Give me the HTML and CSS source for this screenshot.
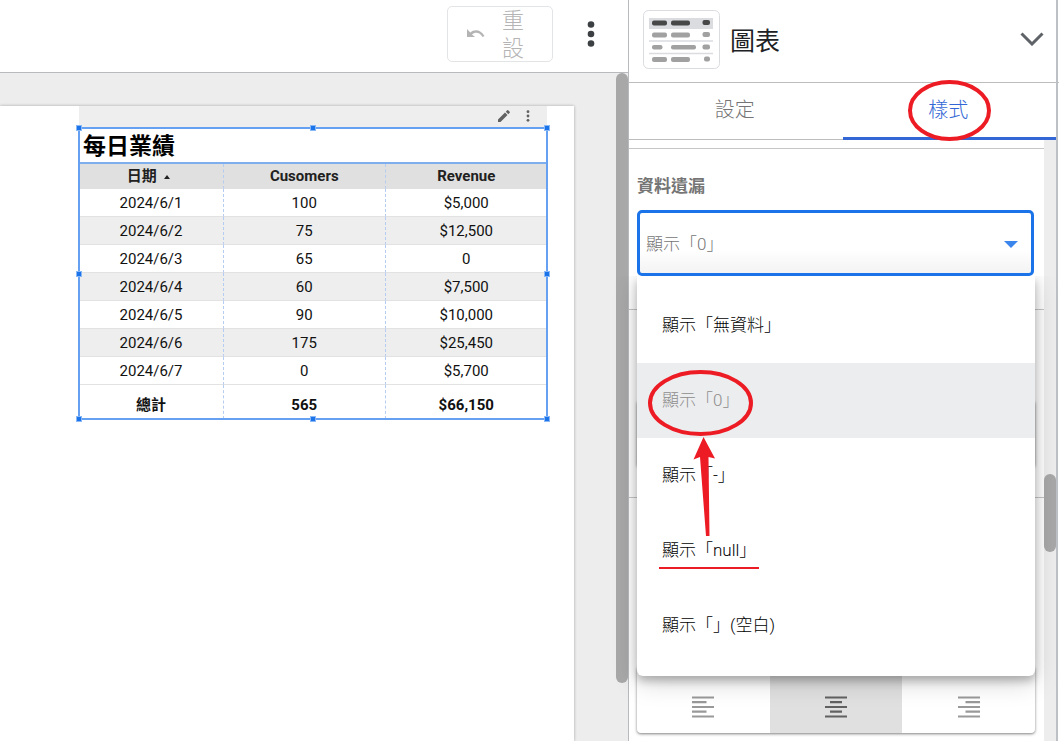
FILE: index.html
```html
<!DOCTYPE html>
<html lang="zh-Hant">
<head>
<meta charset="utf-8">
<title>每日業績</title>
<meta name="viewport" content="width=device-width, initial-scale=1">
<link rel="stylesheet" href="styles.css">
</head>
<body>
<div class="app">
  <main class="editor">
    <header class="toolbar">
      <button class="reset" type="button">
        <svg class="reset-icon" width="18" height="10" viewBox="0 0 18 10" aria-hidden="true"><path d="M0 0v8h8L5 5.400C8 2.600 13 3 15.500 8l2-1C14 .600 7.500-.200 3.300 3.500Z" fill="currentColor"/></svg>
        <span class="reset-label">重設</span>
      </button>
      <button class="icon-button" type="button" aria-label="更多選項">
        <svg width="8" height="26" viewBox="0 0 8 26" aria-hidden="true"><g fill="currentColor"><circle cx="4" cy="3.500" r="3.300"/><circle cx="4" cy="13" r="3.300"/><circle cx="4" cy="22.500" r="3.300"/></g></svg>
      </button>
    </header>
    <div class="workspace">
      <div class="page">
        <section class="widget">
          <div class="widget-bar">
            <button class="icon-button" type="button" aria-label="編輯">
              <svg width="12" height="12" viewBox="0 0 12 12" aria-hidden="true"><path d="M0 9.500V12h2.500l7-7L7 2.500ZM11.700 2.800a.8.8 0 0 0 0-1L10.200.300a.8.8 0 0 0-1 0L7.800 1.700l2.500 2.500Z" fill="currentColor"/></svg>
            </button>
            <button class="icon-button" type="button" aria-label="選單">
              <svg width="4" height="12" viewBox="0 0 4 12" aria-hidden="true"><g fill="currentColor"><circle cx="2" cy="1.700" r="1.400"/><circle cx="2" cy="6" r="1.400"/><circle cx="2" cy="10.300" r="1.400"/></g></svg>
            </button>
          </div>
          <div class="frame">
            <h1 class="title">每日業績</h1>
            <table class="report">
              <thead><tr><th>日期 <svg class="sort" width="6" height="4" viewBox="0 0 6 4" aria-hidden="true"><path d="M3 0l3 4H0Z" fill="currentColor"/></svg></th><th>Cusomers</th><th>Revenue</th></tr></thead>
              <tbody>
                <tr><td>2024/6/1</td><td>100</td><td>$5,000</td></tr>
                <tr><td>2024/6/2</td><td>75</td><td>$12,500</td></tr>
                <tr><td>2024/6/3</td><td>65</td><td>0</td></tr>
                <tr><td>2024/6/4</td><td>60</td><td>$7,500</td></tr>
                <tr><td>2024/6/5</td><td>90</td><td>$10,000</td></tr>
                <tr><td>2024/6/6</td><td>175</td><td>$25,450</td></tr>
                <tr><td>2024/6/7</td><td>0</td><td>$5,700</td></tr>
              </tbody>
              <tfoot><tr><td>總計</td><td>565</td><td>$66,150</td></tr></tfoot>
            </table>
            <i class="handle top left"></i><i class="handle top center"></i><i class="handle top right"></i>
            <i class="handle middle left"></i><i class="handle middle right"></i>
            <i class="handle bottom left"></i><i class="handle bottom center"></i><i class="handle bottom right"></i>
          </div>
        </section>
      </div>
      <div class="scroll-thumb"></div>
    </div>
  </main>

  <aside class="panel">
    <header class="panel-header">
      <svg class="chart-icon" width="77" height="59" viewBox="0 0 77 59" aria-hidden="true">
        <rect x=".5" y=".5" width="76" height="58" rx="5" fill="#fff" stroke="#dadce0"/>
        <path d="M6 8h64v11H6Z" fill="#dadce0"/>
        <path d="M6 31h64M6 43.500h64" stroke="#dadce0" stroke-width="1.500"/>
        <g fill="#484848"><rect x="9" y="10.500" width="15" height="5" rx="2"/><rect x="28" y="10.500" width="19" height="5" rx="2"/><rect x="59.500" y="10" width="7.500" height="5" rx="2"/></g>
        <g fill="#a1a1a1"><rect x="9" y="22.500" width="15" height="5" rx="2"/><rect x="28" y="22.500" width="19" height="5" rx="2"/><rect x="59.500" y="22" width="7.500" height="5" rx="2"/><rect x="9" y="35" width="10.500" height="4.500" rx="2"/><rect x="28" y="35" width="25" height="4.500" rx="2"/><rect x="59.500" y="34.500" width="7.500" height="5" rx="2"/><rect x="9" y="47" width="15" height="5" rx="2"/><rect x="28" y="47" width="19" height="5" rx="2"/><rect x="61" y="46.500" width="6" height="5" rx="2"/></g>
      </svg>
      <h2 class="panel-title">圖表</h2>
      <button class="icon-button" type="button" aria-label="展開">
        <svg width="24" height="14" viewBox="0 0 24 14" aria-hidden="true"><path d="M1.500 1.500 12 12 22.500 1.500" fill="none" stroke="#5f6368" stroke-width="3"/></svg>
      </button>
    </header>
    <nav class="tabs" role="tablist">
      <button class="tab" type="button" role="tab" aria-selected="false">設定</button>
      <button class="tab active" type="button" role="tab" aria-selected="true">樣式</button>
    </nav>
    <div class="panel-body">
      <div class="sections">
        <section class="section missing">
          <label class="label" for="missing">資料遺漏</label>
          <div class="select-box">
            <select class="select" id="missing"><option>顯示「0」</option></select>
            <svg class="caret" width="14" height="7" viewBox="0 0 14 7" aria-hidden="true"><path d="M0 0h14L7 7Z" fill="#3b86ed"/></svg>
            <ul class="menu" role="listbox" aria-label="資料遺漏">
              <li class="option" role="option">顯示「無資料」</li>
              <li class="option selected" role="option" aria-selected="true">顯示「0」</li>
              <li class="option" role="option">顯示「-」</li>
              <li class="option" role="option">顯示「null」</li>
              <li class="option" role="option">顯示「」(空白)</li>
            </ul>
          </div>
        </section>
        <section class="section header-align"><div class="align-group"></div></section>
        <section class="section body-align">
          <div class="align-group">
            <button class="align" type="button" aria-label="靠左"><svg width="22" height="22" viewBox="0 0 22 22" aria-hidden="true"><path d="M0 1.500h22M0 6.200h14.500M0 11h22M0 15.700h14.500M0 20.500h22" stroke="currentColor" stroke-width="2.200"/></svg></button>
            <button class="align pressed" type="button" aria-label="置中" aria-pressed="true"><svg width="22" height="22" viewBox="0 0 22 22" aria-hidden="true"><path d="M0 1.500h22M5 6.200h12M0 11h22M5 15.700h12M0 20.500h22" stroke="currentColor" stroke-width="2.200"/></svg></button>
            <button class="align" type="button" aria-label="靠右"><svg width="22" height="22" viewBox="0 0 22 22" aria-hidden="true"><path d="M0 1.500h22M7.500 6.200H22M0 11h22M7.500 15.700H22M0 20.500h22" stroke="currentColor" stroke-width="2.200"/></svg></button>
          </div>
        </section>
      </div>
      <div class="track"><div class="track-thumb"></div></div>
    </div>
    <svg class="marks" width="430" height="600" viewBox="0 0 430 600" aria-hidden="true">
      <g fill="none" stroke="#ed1c24" stroke-width="4">
        <ellipse cx="321.500" cy="110.500" rx="39.500" ry="28.500"/>
        <ellipse cx="72.500" cy="403" rx="50.500" ry="31"/>
      </g>
      <path d="M75.500 437 87 458.500 80.500 457 81.500 536H78L72 457 65.500 459.500Z" fill="#ed1c24"/>
      <path d="M31 568h100" stroke="#ed1c24" stroke-width="2"/>
    </svg>
  </aside>
  <div class="edge"></div>
</div>
</body>
</html>
```
FILE: styles.css
```css
* {
  box-sizing: border-box;
}

body {
  margin: 0;
  background: #fff;
  color: #202124;
  font-family: Roboto, "Noto Sans CJK TC", sans-serif;
}

button {
  padding: 0;
  border: 0;
  background: none;
  color: inherit;
  font: inherit;
}

.app {
  display: grid;
  grid-template-columns: minmax(0, 1fr) 430px 1px;
  height: 100vh;
  overflow: hidden;
}

.editor {
  display: flex;
  flex-direction: column;
  min-height: 0;
}

.toolbar {
  display: flex;
  align-items: center;
  justify-content: flex-end;
  gap: 34px;
  flex: none;
  height: 73px;
  padding: 0 33px 5px 0;
  border-bottom: 1px solid #b8babd;
  color: #3c4043;
}

.icon-button {
  display: flex;
}

.reset {
  display: flex;
  align-items: center;
  justify-content: space-between;
  width: 106px;
  height: 56px;
  padding: 0 28px 0 19px;
  border: 1px solid #e3e4e6;
  border-radius: 5px;
  color: #b4b4b4;
}

.reset-label {
  width: 22px;
  padding-top: 2px;
  font-size: 22px;
  font-weight: 300;
  line-height: 28px;
}

.workspace {
  display: flex;
  justify-content: space-between;
  flex: 1;
  background: #ededed;
}

.page {
  flex: 1;
  margin: 33px 42px 0 0;
  background: #fff;
  box-shadow: 0 0 3px rgba(0, 0, 0, 0.3);
}

.widget {
  width: 468px;
  margin: 0 27px 0 auto;
}

.widget-bar {
  display: flex;
  align-items: center;
  justify-content: flex-end;
  gap: 16px;
  height: 22px;
  padding: 0 17px 2px 0;
  background: #eee;
  color: #616161;
}

.frame {
  position: relative;
  outline: 2px solid #66a0f2;
  outline-offset: -1px;
}

.title {
  height: 36px;
  margin: 0;
  padding: 1px 0 0 4px;
  border-bottom: 2px solid #7eaeed;
  color: #000;
  font-size: 23px;
  line-height: 36px;
}

.report {
  width: 100%;
  table-layout: fixed;
  border-collapse: separate;
  border-spacing: 0;
  color: #111;
  font-size: 15px;
  line-height: 20px;
  text-align: center;
}

.report th,
.report td {
  height: 28px;
  padding: 0;
  border-right: 1px dashed #b5cdf0;
  border-bottom: 1px solid #e2e2e2;
}

.report th:last-child,
.report td:last-child {
  border-right: 0;
}

.report th:first-child {
  width: 145px;
}

.report th {
  height: 25px;
  border-bottom-color: #e0e0e0;
  background: #e0e0e0;
  color: #212121;
}

.report tbody tr:nth-child(even) {
  background: #eee;
}

.report tfoot td {
  height: 34px;
  padding-top: 6px;
  border-bottom: 0;
  font-weight: 700;
}

.sort {
  margin: 0 5px 2px 4px;
}

.handle {
  position: absolute;
  width: 6px;
  height: 6px;
  margin: -3px;
  border: 1px solid #8ab7f5;
  background: #1a73e8;
}

.top { top: 0; }
.middle { top: 50%; }
.bottom { bottom: 0; }
.left { left: 0; }
.center { left: 50%; }
.right { right: 0; }

.scroll-thumb {
  width: 12px;
  height: 610px;
  border-radius: 6px;
  background: #a8a8a8;
}

.panel {
  position: relative;
  display: flex;
  flex-direction: column;
  min-height: 0;
  border-right: 2px solid #bdc1c6;
  border-left: 1px solid #b8babd;
}

.panel-header {
  display: flex;
  align-items: center;
  gap: 10px;
  flex: none;
  height: 83px;
  padding: 0 12px 4px 14px;
  border-bottom: 1px solid #bdbdbd;
}

.panel-title {
  flex: 1;
  margin: 0;
  font-size: 25px;
  font-weight: 400;
}

.tabs {
  display: grid;
  grid-template-columns: 1fr 1fr;
  flex: none;
  height: 57px;
  border-bottom: 1px solid #bdbdbd;
}

.tab {
  height: 57px;
  padding: 0 2px 4px 0;
  border-bottom: 3px solid transparent;
  color: #757575;
  font-size: 20px;
  font-weight: 300;
}

.tab.active {
  border-bottom-color: #3367d6;
  color: #3367d6;
}

.panel-body {
  display: flex;
  flex: 1;
  min-height: 0;
}

.sections {
  flex: 1;
  padding-top: 8px;
}

.section {
  padding: 0 9px 0 8px;
  border-top: 1px solid #c6c6c6;
}

.missing {
  height: 161px;
  padding-top: 25px;
}

.header-align {
  height: 188px;
  padding-top: 90px;
}

.body-align {
  padding-top: 168px;
}

.label {
  display: block;
  margin-bottom: 12px;
  color: #757575;
  font-size: 17px;
  font-weight: 700;
  line-height: 24px;
}

.select-box {
  position: relative;
}

.select {
  display: block;
  width: calc(100% - 1px);
  height: 66px;
  padding: 2px 6px 0;
  border: 3px solid #1a73e8;
  border-radius: 5px;
  outline: 0;
  appearance: none;
  background: linear-gradient(#fff 60%, #f3f3f3);
  color: #757575;
  font: 300 17px Roboto, "Noto Sans CJK TC", sans-serif;
}

.caret {
  position: absolute;
  top: 31px;
  right: 17px;
}

.menu {
  position: absolute;
  z-index: 1;
  top: 100%;
  right: 0;
  left: 0;
  margin: 0;
  padding: 12px 0 13px;
  border-radius: 0 0 6px 6px;
  background: #fff;
  box-shadow: 0 5px 8px rgba(0, 0, 0, 0.24), 0 6px 26px rgba(0, 0, 0, 0.18);
  clip-path: inset(0 -60px -60px -60px);
  list-style: none;
}

.option {
  height: 75px;
  padding: 0 25px;
  color: #000;
  font-size: 17px;
  font-weight: 300;
  line-height: 75px;
}

.option.selected {
  background: #ecedef;
  color: #8c8c8c;
}

.align-group {
  display: grid;
  grid-template-columns: repeat(3, 1fr);
  height: 67px;
  overflow: hidden;
  border-radius: 4px;
  background: #fff;
  box-shadow: 0 1px 3px rgba(0, 0, 0, 0.5);
}

.align {
  display: grid;
  place-items: center;
  padding-top: 14px;
  color: #999;
}

.align.pressed {
  background: #e0e0e0;
  color: #616161;
}

.track {
  width: 12px;
  padding-top: 334px;
  background: #ededed;
}

.track-thumb {
  height: 78px;
  border-radius: 6px;
  background: #a8a8a8;
}

.marks {
  position: absolute;
  z-index: 2;
  top: 0;
  left: -1px;
  pointer-events: none;
}

.edge {
  height: 83px;
  border-bottom: 1px solid #bdbdbd;
}
```
